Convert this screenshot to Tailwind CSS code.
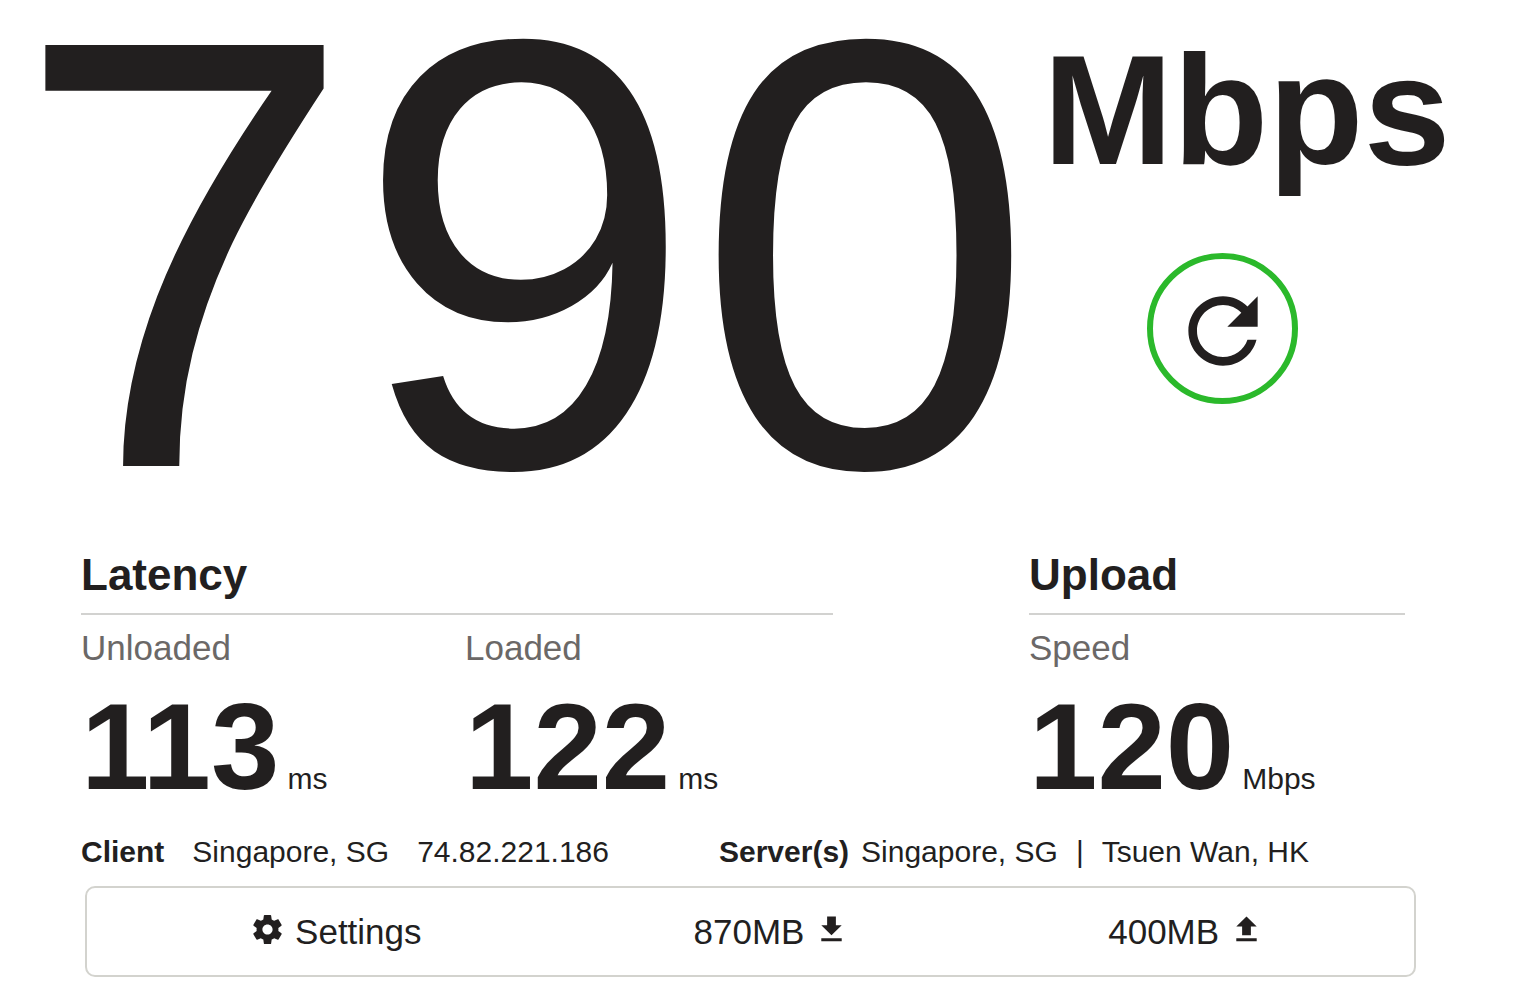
<!DOCTYPE html>
<html lang="en">
<head>
<meta charset="utf-8">
<meta name="viewport" content="width=device-width, initial-scale=1">
<title>Internet Speed Test</title>
<script src="https://cdn.jsdelivr.net/npm/@tailwindcss/browser@4"></script>
</head>
<body class="bg-white font-['Liberation_Sans',Arial,sans-serif] text-[#221f1f] overflow-x-hidden">
<main>
  <section class="flex items-start pl-[14px] pt-1">
    <h1 class="text-[612px] leading-[500px]">790</h1>
    <div class="ml-2 pt-1.5">
      <div class="text-[156px] leading-[200px] font-bold">Mbps</div>
      <button type="button" aria-label="Restart test" class="ml-[104px] mt-[43px] flex size-[151px] items-center justify-center rounded-full border-6 border-[#2bb92b] pt-1">
        <svg class="size-[104px] shrink-0" viewBox="0 0 24 24" fill="currentColor" aria-hidden="true"><path d="M17.65 6.35C16.2 4.9 14.21 4 12 4c-4.42 0-7.99 3.58-7.99 8s3.57 8 7.99 8c3.73 0 6.84-2.55 7.73-6h-2.08c-.82 2.33-3.04 4-5.65 4-3.31 0-6-2.69-6-6s2.69-6 6-6c1.66 0 3.14.69 4.22 1.78L13 11h7V4l-2.35 2.35z"/></svg>
      </button>
    </div>
  </section>

  <section class="mt-[45px] grid grid-cols-[752fr_196fr_376fr] pl-[81px] pr-28">
    <div>
      <h2 class="border-b-2 border-[#d2d2d0] pb-3 text-[44px] leading-[52px] font-bold">Latency</h2>
      <div class="grid grid-cols-[384fr_368fr] pt-[11px]">
        <div>
          <div class="text-[35px] leading-[44px] text-[#6b6867]">Unloaded</div>
          <div class="flex items-baseline gap-2"><span class="text-[123px] leading-[154px] font-bold">113</span><span class="text-[30px]">ms</span></div>
        </div>
        <div>
          <div class="text-[35px] leading-[44px] text-[#6b6867]">Loaded</div>
          <div class="flex items-baseline gap-2"><span class="text-[123px] leading-[154px] font-bold">122</span><span class="text-[30px]">ms</span></div>
        </div>
      </div>
    </div>
    <div class="col-start-3">
      <h2 class="border-b-2 border-[#d2d2d0] pb-3 text-[44px] leading-[52px] font-bold">Upload</h2>
      <div class="pt-[11px]">
        <div class="text-[35px] leading-[44px] text-[#6b6867]">Speed</div>
        <div class="flex items-baseline gap-2"><span class="text-[123px] leading-[154px] font-bold">120</span><span class="text-[30px]">Mbps</span></div>
      </div>
    </div>
  </section>

  <section class="mt-[7px] grid grid-cols-[638fr_686fr] whitespace-nowrap pl-[81px] pr-28 text-[30px] leading-[42px]">
    <div class="flex gap-7"><b>Client</b><span>Singapore, SG</span><span>74.82.221.186</span></div>
    <div class="flex gap-3"><b>Server(s)</b><div class="flex gap-[18px]"><span>Singapore, SG</span><span>|</span><span>Tsuen Wan, HK</span></div></div>
  </section>

  <section class="mt-[13px] ml-[85px] mr-[101px] grid grid-cols-[498fr_374fr_456fr] items-center rounded-[10px] border-2 border-[#d3d3ce] py-5 text-[35px] leading-[47px]">
    <button type="button" class="flex items-center justify-center gap-2.5">
      <svg class="mb-1 size-[35px]" viewBox="0 0 24 24" fill="currentColor" aria-hidden="true"><path d="M19.43 12.98c.04-.32.07-.64.07-.98s-.03-.66-.07-.98l2.11-1.65c.19-.15.24-.42.12-.64l-2-3.46c-.12-.22-.39-.3-.61-.22l-2.49 1c-.52-.4-1.08-.73-1.69-.98l-.38-2.65C14.46 2.18 14.25 2 14 2h-4c-.25 0-.46.18-.49.42l-.38 2.65c-.61.25-1.17.59-1.69.98l-2.49-1c-.23-.09-.49 0-.61.22l-2 3.46c-.13.22-.07.49.12.64l2.11 1.65c-.04.32-.07.65-.07.98s.03.66.07.98l-2.11 1.65c-.19.15-.24.42-.12.64l2 3.46c.12.22.39.3.61.22l2.49-1c.52.4 1.08.73 1.69.98l.38 2.65c.03.24.24.42.49.42h4c.25 0 .46-.18.49-.42l.38-2.65c.61-.25 1.17-.59 1.69-.98l2.49 1c.23.09.49 0 .61-.22l2-3.46c.12-.22.07-.49-.12-.64l-2.11-1.65zM12 15.5c-1.93 0-3.5-1.57-3.5-3.5s1.57-3.5 3.5-3.5 3.5 1.57 3.5 3.5-1.57 3.5-3.5 3.5z"/></svg>
      Settings
    </button>
    <div class="flex items-center justify-center gap-2.5">870MB
      <svg class="mb-1 size-[35px]" viewBox="0 0 24 24" fill="currentColor" aria-hidden="true"><path d="M19 9h-4V3H9v6H5l7 7 7-7zM5 18v2h14v-2H5z"/></svg>
    </div>
    <div class="flex items-center justify-center gap-2.5">400MB
      <svg class="mb-1 size-[35px]" viewBox="0 0 24 24" fill="currentColor" aria-hidden="true"><path d="M9 16h6v-6h4l-7-7-7 7h4v6zm-4 2h14v2H5z"/></svg>
    </div>
  </section>
</main>
</body>
</html>
